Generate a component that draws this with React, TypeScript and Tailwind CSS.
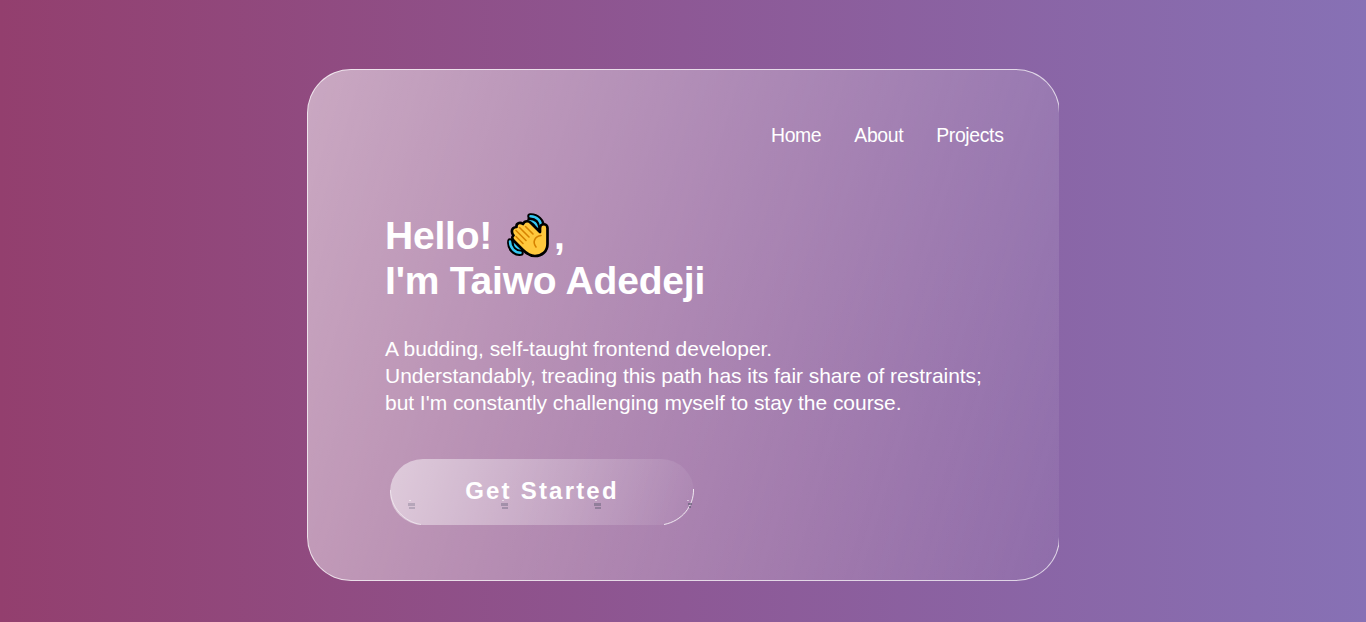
const navItems = ["Home", "About", "Projects"];

function WavingHand() {
  return (
    <svg className="ml-[12px] mr-[4px] h-[45px] w-[43px] shrink-0" viewBox="0 0 43 45" fill="none" strokeLinecap="round" strokeLinejoin="round">
      <path d="M23 3C30 2.500 35.500 8 35.500 15M3 28C2 35 7 41 14 40" stroke="#000" strokeWidth="5.500" />
      <path d="M21 3L35 9L35 18L29 19L20 8ZM2.500 26L7 28L17 37L15 41L7 38Z" fill="#000" />
      <path d="M23.500 3.200C30 3.200 34.200 8 34.500 14.500M22.500 8.200C27 8.200 29.800 11 30 14.500M3 28.500C3 35 8 39.700 13.500 39.700M8 30C8 33 10.500 35.200 14 35.500" stroke="#35c8f4" strokeWidth="2.500" />
      <path d="M5 19C4.500 15.500 7 14 9.500 14C9 10 13 9 16 11C18 7 22 8 24 10L33 19V15C33 10 40.500 10 40.500 15V31C40.500 38.500 35 43 28 43C23 43 19 40 16 37L7 28C4.500 25.500 5 23.500 6.500 22.500C5.500 21.500 5 20.500 5 19Z" fill="#ffc83d" stroke="#000" strokeWidth="2.700" />
      <path d="M9 17.500L19 27.500M12.500 14.500L22 24M18.500 13.500L26 21M9 23.500L16 30.500M34 22.500C28 23.500 25 28.500 29 34" stroke="#d68200" strokeWidth="1.600" />
    </svg>
  );
}

function GetStarted() {
  return (
    <button className="relative ml-[5px] mt-[43px] flex h-[66px] w-[304px] items-center justify-center rounded-[35px] bg-[linear-gradient(107deg,rgba(255,255,255,0.5),rgba(255,255,255,0.03))] pb-[3px] text-2xl font-bold tracking-[2.2px]">
      Get Started
      <svg className="absolute inset-0" width="304" height="66" fill="none">
        <path d="M.5 31C.5 48 14 63 31 65.5" stroke="#fff" strokeOpacity=".5" />
        <path d="M303.5 30C304 47 292 62 274 65.5" stroke="#fff" strokeOpacity=".8" />
        <g fill="#656078">
          <path d="M18 44h7v3h-7zm1 4h6v2h-6z" opacity=".3" />
          <path d="M111 44h7v3h-7zm1 4h6v2h-6z" opacity=".4" />
          <path d="M204 44h7v3h-7zm1 4h6v2h-6z" opacity=".5" />
          <path d="M298 44h4v2h-4zm1 3h2v2h-2z" opacity=".7" />
        </g>
        <path d="M19 41h2v1h-2zm93 0h2v1h-2zm93 0h2v1h-2zm92 0h2v1h-2z" fill="#fff" opacity=".5" />
      </svg>
    </button>
  );
}

export default function App() {
  return (
    <div className="flex h-[622px] justify-center overflow-hidden bg-[linear-gradient(to_right,#933f6e,#8d5895_50%,#8771b5)] pt-[69px] font-['Liberation_Sans',Arial,sans-serif] text-white">
      <div className="h-[512px] w-[752px] overflow-hidden">
        <main className="h-[512px] w-[753px] rounded-[44px] border border-white/70 bg-[linear-gradient(107deg,rgba(255,255,255,0.52),rgba(255,255,255,0.05))] bg-origin-border">
          <nav className="flex justify-end gap-[33px] pr-[55.5px] pt-[53px] text-[19.4px] leading-[24px] tracking-[-0.35px]">
            {navItems.map((item) => <a key={item}>{item}</a>)}
          </nav>
          <section className="ml-[77px] mt-[66px]">
            <h1 className="text-[39px] font-bold leading-[45px] tracking-[-0.2px]">
              <span className="flex h-[45px] items-center"><span className="w-[110px]">Hello!</span><WavingHand />,</span>
              <span className="block">I&apos;m Taiwo Adedeji</span>
            </h1>
            <p className="mt-[32px] text-[21px] leading-[27px] tracking-[-0.04px]">
              A budding, self-taught frontend developer.<br />
              Understandably, treading this path has its fair share of restraints;<br />
              but I&apos;m constantly challenging myself to stay the course.
            </p>
            <GetStarted />
          </section>
        </main>
      </div>
    </div>
  );
}
